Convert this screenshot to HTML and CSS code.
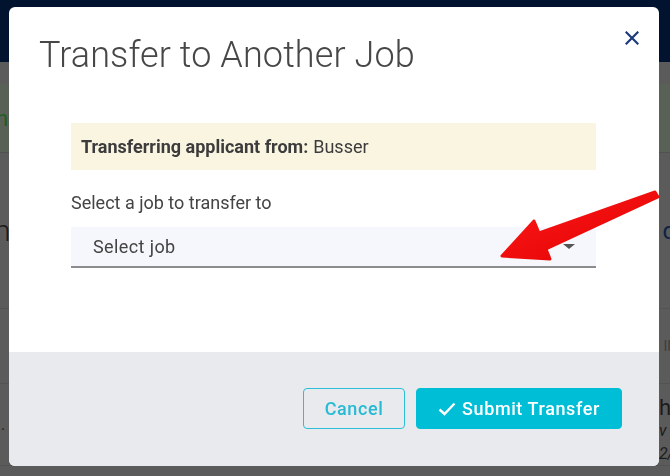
FILE: index.html
```html
<!DOCTYPE html>
<html lang="en">
<head>
    <meta charset="UTF-8">
    <meta name="viewport" content="width=device-width, initial-scale=1.0">
    <title>Transfer to Another Job</title>
    <link rel="stylesheet" href="styles.css">
</head>
<body>
    <!-- Page behind the dialog (dimmed) -->
    <div class="page">
        <div class="topbar"></div>
        <div class="notice"><span class="notice-text">n</span></div>
        <div class="row row-tall">
            <span class="big-text">n</span>
            <span class="link-text">d</span>
        </div>
        <div class="row row-mid">
            <span></span>
            <span class="small-caps">IR</span>
        </div>
        <div class="row row-last">
            <span class="dot">.</span>
            <span class="stack">
                <span class="stack-h">h</span>
                <span class="stack-v">v</span>
                <span class="stack-d">2/</span>
            </span>
        </div>
    </div>

    <!-- Dialog -->
    <div class="overlay">
        <div class="modal">
            <div class="modal-header">
                <h1 class="modal-title">Transfer to Another Job</h1>
                <button class="close-btn" aria-label="Close">
                    <svg width="14" height="14" viewBox="0 0 14 14">
                        <path d="M1.5 1.5 L12.5 12.5 M12.5 1.5 L1.5 12.5" stroke="#1b3b7d" stroke-width="2.2" stroke-linecap="square" fill="none"/>
                    </svg>
                </button>
            </div>

            <div class="modal-body">
                <div class="info-box">
                    <strong>Transferring applicant from:</strong> Busser
                </div>
                <label class="field-label">Select a job to transfer to</label>
                <div class="select">
                    <span>Select job</span>
                    <span class="caret"></span>
                </div>
            </div>

            <div class="modal-footer">
                <button class="btn btn-outline">Cancel</button>
                <button class="btn btn-primary">
                    <svg width="18" height="14" viewBox="0 0 18 14">
                        <path d="M1.5 7.5 L6.5 12 L16.5 1.5" stroke="#fff" stroke-width="2.4" fill="none"/>
                    </svg>
                    Submit Transfer
                </button>
            </div>
        </div>
    </div>

    <!-- Annotation arrow drawn over the screenshot -->
    <svg class="annotation" width="670" height="476" viewBox="0 0 670 476">
        <defs>
            <linearGradient id="arrow-fill" x1="0" y1="0" x2="1" y2="1">
                <stop offset="0" stop-color="#ff1a1a"/>
                <stop offset="1" stop-color="#e00000"/>
            </linearGradient>
        </defs>
        <polygon points="655,192 539,233 534,221 502,256 550,259 546,249 658,197"
                 fill="url(#arrow-fill)" stroke="url(#arrow-fill)" stroke-width="3" stroke-linejoin="round"/>
    </svg>
</body>
</html>
```

FILE: styles.css
```css
/* Global */
body {
    margin: 0;
    font-family: 'Roboto', 'Liberation Sans', sans-serif;
    background: #5b5b5b;
    overflow: hidden;
}

/* Dimmed page behind */
.page {
    height: 476px;
}

.topbar {
    height: 62px;
    background: #021330;
}

.notice {
    margin-top: 22px;
    height: 68px;
    background: #596157;
    border-bottom: 1px solid #515151;
    display: flex;
    align-items: center;
}

.notice-text {
    font-size: 22px;
    color: #1e5e1e;
    margin-left: -4px;
}

.row {
    display: flex;
    justify-content: space-between;
    border-bottom: 1px solid #535353;
}

.row-tall {
    height: 155px;
    align-items: center;
}

.big-text {
    font-size: 30px;
    font-weight: 300;
    color: #1c1c1c;
    margin-left: -6px;
}

.link-text {
    font-size: 24px;
    color: #0e2244;
    margin-right: -6px;
}

.row-mid {
    height: 74px;
    align-items: center;
}

.small-caps {
    font-size: 14px;
    color: #3e3e3e;
    margin-right: -6px;
}

.row-last {
    align-items: center;
}

.dot {
    color: #222;
    margin-left: 1px;
}

.stack {
    display: flex;
    flex-direction: column;
    margin-right: -4px;
    margin-top: 12px;
    line-height: 23px;
}

.stack-h {
    font-size: 22px;
    color: #1c1c1c;
}

.stack-v, .stack-d {
    font-size: 16px;
    font-style: italic;
    color: #1c1c1c;
}

/* Dialog */
.overlay {
    position: fixed;
    inset: 0;
    display: flex;
    justify-content: flex-start;
    align-items: flex-start;
    padding: 7px 0 0 9px;
}

.modal {
    width: 650px;
    height: 459px;
    background: #fff;
    border-radius: 6px;
    overflow: hidden;
    display: flex;
    flex-direction: column;
}

.modal-header {
    display: flex;
    justify-content: space-between;
    align-items: flex-start;
    padding: 27px 20px 0 30px;
}

.modal-title {
    margin: 0;
    font-size: 36px;
    font-weight: 300;
    color: #474747;
    letter-spacing: 0.1px;
}

.close-btn {
    border: none;
    background: none;
    padding: 0;
    margin-top: -3px;
    width: 14px;
    height: 14px;
    cursor: pointer;
}

.modal-body {
    flex: 1;
    padding: 47px 63px 0 62px;
}

.info-box {
    background: #faf5e1;
    height: 47px;
    display: flex;
    align-items: center;
    gap: 5px;
    padding-left: 10px;
    font-size: 18px;
    color: #3c3c3c;
}

.info-box strong {
    font-weight: 700;
}

.field-label {
    display: block;
    margin-top: 22px;
    font-size: 18px;
    color: #444;
}

.select {
    margin-top: 14px;
    height: 39px;
    background: #f6f7fc;
    border-bottom: 2px solid #8c8c8c;
    display: flex;
    align-items: center;
    justify-content: space-between;
    padding: 0 21px 0 22px;
    font-size: 18px;
    color: #444;
    letter-spacing: 0.4px;
}

.caret {
    width: 0;
    height: 0;
    border-left: 6px solid transparent;
    border-right: 6px solid transparent;
    border-top: 5px solid #555;
}

.modal-footer {
    height: 114px;
    background: #e9eaee;
    display: flex;
    justify-content: flex-end;
    align-items: flex-start;
    gap: 11px;
    padding: 36px 37px 0 0;
    box-sizing: border-box;
}

.btn {
    height: 41px;
    border-radius: 4px;
    font-family: 'Roboto', sans-serif;
    font-size: 18px;
    font-weight: 500;
    letter-spacing: 0.6px;
    cursor: pointer;
    display: flex;
    align-items: center;
    justify-content: center;
    gap: 6px;
}

.btn-outline {
    width: 102px;
    background: transparent;
    border: 1px solid #2bbfd8;
    color: #26bad3;
}

.btn-primary {
    width: 206px;
    background: #00bed6;
    border: 1px solid #00bed6;
    color: #fff;
}

/* Annotation */
.annotation {
    position: fixed;
    left: 0;
    top: 0;
    pointer-events: none;
}
```
